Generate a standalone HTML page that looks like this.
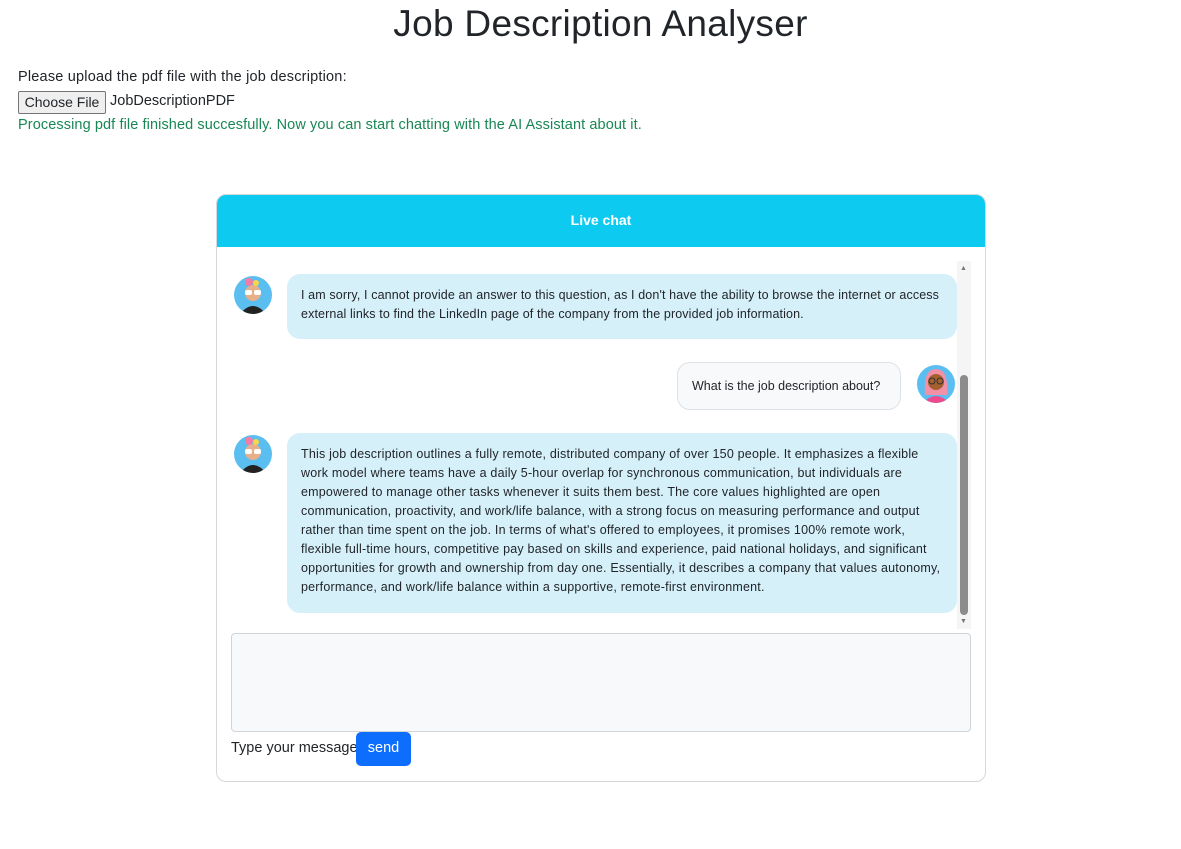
<!DOCTYPE html>
<html><head><style>
body{margin:0;width:1181px;height:849px;background:#fff;font-family:"Liberation Sans",sans-serif;color:#212529;position:relative;overflow:hidden}
.a{position:absolute}
h1{position:absolute;left:0;width:1201px;top:3px;margin:0;text-align:center;font-size:37px;font-weight:500;letter-spacing:0.3px}
.card{left:216px;top:194px;width:768px;height:586px;border:1px solid #d5d8dc;border-radius:10px;overflow:hidden}
.hdr{left:0;top:0;width:768px;height:52px;background:#0dcaf0;color:#fff;font-weight:bold;font-size:14px;text-align:center;line-height:50px}
.bub{background:#d6f0fa;border-radius:13px;font-size:12.5px;line-height:19px;padding:12px 14px;box-sizing:border-box;white-space:nowrap}
.av{width:38px;height:38px;border-radius:50%;background:#5bbef0;overflow:hidden}
</style></head><body>
<h1>Job Description Analyser</h1>
<div class="a" style="left:18px;top:69px;font-size:14.5px;letter-spacing:0.2px">Please upload the pdf file with the job description:</div>
<div class="a" style="left:18px;top:91px;width:86px;height:21px;border:1px solid #767676;background:#efefef;border-radius:2px;font-size:14px;line-height:21px;text-align:center">Choose File</div>
<div class="a" style="left:110px;top:93px;font-size:14.5px">JobDescriptionPDF</div>
<div class="a" style="left:18px;top:117px;font-size:14.5px;color:#198754;letter-spacing:0.1px">Processing pdf file finished succesfully. Now you can start chatting with the AI Assistant about it.</div>
<div class="a card">
 <div class="a hdr">Live chat</div>
 <div class="a av" style="left:17px;top:81px"><svg width="38" height="38"><circle cx="19" cy="17" r="8" fill="#e8b089"/><rect x="11" y="14" width="7" height="5" rx="2" fill="#fff"/><rect x="20" y="14" width="7" height="5" rx="2" fill="#fff"/><circle cx="15" cy="6" r="4" fill="#f37ca5"/><circle cx="22" cy="7" r="3" fill="#f7d64a"/><path d="M6 38 Q19 22 32 38Z" fill="#222"/></svg></div>
 <div class="a bub" style="left:70px;top:79px;width:670px;height:65px;letter-spacing:0.12px">I am sorry, I cannot provide an answer to this question, as I don't have the ability to browse the internet or access<br>external links to find the LinkedIn page of the company from the provided job information.</div>
 <div class="a bub" style="left:460px;top:167px;width:224px;height:48px;background:#f8f9fa;border:1px solid #dee2e6;padding:14px">What is the job description about?</div>
 <div class="a av" style="left:700px;top:170px"><svg width="38" height="38"><path d="M8 30 Q6 4 19 4 Q32 4 30 30Z" fill="#f290a8"/><circle cx="19" cy="17" r="8" fill="#a5602f"/><circle cx="15" cy="16" r="3" fill="none" stroke="#333"/><circle cx="23" cy="16" r="3" fill="none" stroke="#333"/><path d="M6 38 Q19 24 32 38Z" fill="#ec4b8d"/></svg></div>
 <div class="a av" style="left:17px;top:240px"><svg width="38" height="38"><circle cx="19" cy="17" r="8" fill="#e8b089"/><rect x="11" y="14" width="7" height="5" rx="2" fill="#fff"/><rect x="20" y="14" width="7" height="5" rx="2" fill="#fff"/><circle cx="15" cy="6" r="4" fill="#f37ca5"/><circle cx="22" cy="7" r="3" fill="#f7d64a"/><path d="M6 38 Q19 22 32 38Z" fill="#222"/></svg></div>
 <div class="a bub" style="left:70px;top:238px;width:670px;height:180px;letter-spacing:0.2px">This job description outlines a fully remote, distributed company of over 150 people. It emphasizes a flexible<br>work model where teams have a daily 5-hour overlap for synchronous communication, but individuals are<br>empowered to manage other tasks whenever it suits them best. The core values highlighted are open<br>communication, proactivity, and work/life balance, with a strong focus on measuring performance and output<br>rather than time spent on the job. In terms of what's offered to employees, it promises 100% remote work,<br>flexible full-time hours, competitive pay based on skills and experience, paid national holidays, and significant<br>opportunities for growth and ownership from day one. Essentially, it describes a company that values autonomy,<br>performance, and work/life balance within a supportive, remote-first environment.</div>
 <div class="a" style="left:740px;top:66px;width:14px;height:368px;background:#f5f5f5"></div>
 <div class="a" style="left:743px;top:180px;width:8px;height:240px;background:#8c8c8c;border-radius:4px"></div>
 <div class="a" style="left:743px;top:70px;font-size:7px;color:#777">▲</div>
 <div class="a" style="left:743px;top:423px;font-size:7px;color:#777">▼</div>
 <div class="a" style="left:14px;top:438px;width:738px;height:97px;background:#f8f9fa;border:1px solid #ced4da;border-radius:4px"></div>
 <div class="a" style="left:14px;top:545px;font-size:14.5px">Type your message</div>
 <div class="a" style="left:139px;top:537px;width:55px;height:34px;background:#0d6efd;color:#fff;border-radius:5px;font-size:14.5px;line-height:33px;text-align:center">send</div>
</div>
</body></html>
